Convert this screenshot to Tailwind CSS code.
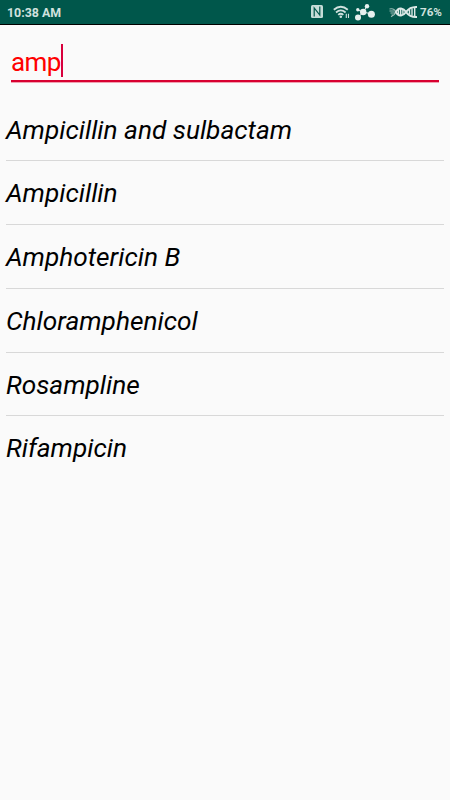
<!DOCTYPE html>
<html lang="en">
<head>
  <meta charset="UTF-8">
  <meta name="viewport" content="width=device-width, initial-scale=1.0">
  <title>Drug search</title>
  <script src="https://cdn.jsdelivr.net/npm/@tailwindcss/browser@4"></script>
</head>
<body class="bg-[#fafafa] font-['Roboto',sans-serif] h-screen overflow-hidden">
  <!-- status bar -->
  <header class="flex items-center h-[25px] bg-[#00574b] border-b border-black pl-[7px] pr-2 text-[#d0e1de] text-[12.4px] font-bold">
    <span class="pt-0.5">10:38 AM</span>
    <div class="flex items-center ml-auto">
      <!-- nfc -->
      <svg class="w-3 h-[13px] mr-[10px]" viewBox="0 0 12 13">
        <rect width="12" height="13" rx="1.5" fill="#c5dcd7"/>
        <path d="M3.2 11.5V3L8.8 10V1.5" fill="none" stroke="#00574b" stroke-width="1.2"/>
      </svg>
      <!-- wifi -->
      <svg class="w-[17px] h-[14px] mr-[5px]" viewBox="0 0 17 14" fill="none" stroke="#d0e1de" stroke-width="1.8">
        <path d="M.8 4.8Q7.8-1.2 14.8 4.8M3 7.5Q7.8 3.2 12.6 7.5M5.2 9.9Q7.8 7.7 10.3 9.9"/>
        <circle cx="7.8" cy="11.8" r="1.3" fill="#d0e1de" stroke="none"/>
        <path d="M13.3 8.8V13M15.5 8.8V13" stroke-width="1.1"/>
      </svg>
      <!-- molecule -->
      <svg class="w-5 h-[18px] mr-[14px]" viewBox="0 0 20 18" fill="#e6f0ee">
        <path d="M3 14.5L8.3 9L11.8 3.2M8.3 9L16.5 11M2.8 7L8.3 9" fill="none" stroke="#e6f0ee" stroke-width="1"/>
        <circle cx="8.2" cy="9" r="3.2"/>
        <circle cx="16.4" cy="11.2" r="3.5"/>
        <circle cx="3" cy="14.6" r="3"/>
        <circle cx="12" cy="3.2" r="2.2"/>
        <circle cx="2.8" cy="6.8" r="1.7"/>
      </svg>
      <!-- dna battery -->
      <svg class="w-[29px] h-3 mr-[2px]" viewBox="0 0 29 12" fill="none">
        <path d="M.5 3Q5.5 2 7 6Q5.5 9.5 2 10.8M.5 5H5.5M1.5 7H6M2.5 9H5" stroke="#9dbeb8" stroke-width="1.1"/>
        <path d="M6.5 7Q8.5 2.2 12 2.5Q15 3 17.3 6.3Q21 11.2 28 11M6.5 5Q8.5 9.8 12 9.5Q15 9 17.3 5.7Q21 .8 28 1" stroke="#dce9e6" stroke-width="2"/>
        <path d="M9.5 4V8.5M11.7 3V9M13.9 4V8.5M20.5 4V8M23 2.5V9.5M25.7 1V11" stroke="#dce9e6" stroke-width="1.4"/>
      </svg>
      <span class="pt-0.5 text-[11.7px]">76%</span>
    </div>
  </header>

  <main class="pt-[19px]">
    <!-- search field -->
    <div class="flex h-[38px] ml-[11px] mr-[11.5px] border-b-2 border-[#d80030] shadow-[0_1px_0_#f0a0b0]">
      <span class="text-[26px] leading-[36px] tracking-[-0.6px] text-[#ff0000]">amp</span>
      <span class="w-0.5 h-[33px] bg-[#d8003c]"></span>
    </div>

    <ul class="mx-1.5 mt-[15.4px] divide-y divide-[#d8d8d8] text-[26.25px] italic text-black">
      <li class="flex items-center h-[63.8px] pt-[3px]">Ampicillin and sulbactam</li>
      <li class="flex items-center h-[63.8px] pt-[3px]">Ampicillin</li>
      <li class="flex items-center h-[63.8px] pt-[3px]">Amphotericin B</li>
      <li class="flex items-center h-[63.8px] pt-[3px]">Chloramphenicol</li>
      <li class="flex items-center h-[63.8px] pt-[3px]">Rosampline</li>
      <li class="flex items-center h-[63.8px] pt-px">Rifampicin</li>
    </ul>
  </main>
</body>
</html>
